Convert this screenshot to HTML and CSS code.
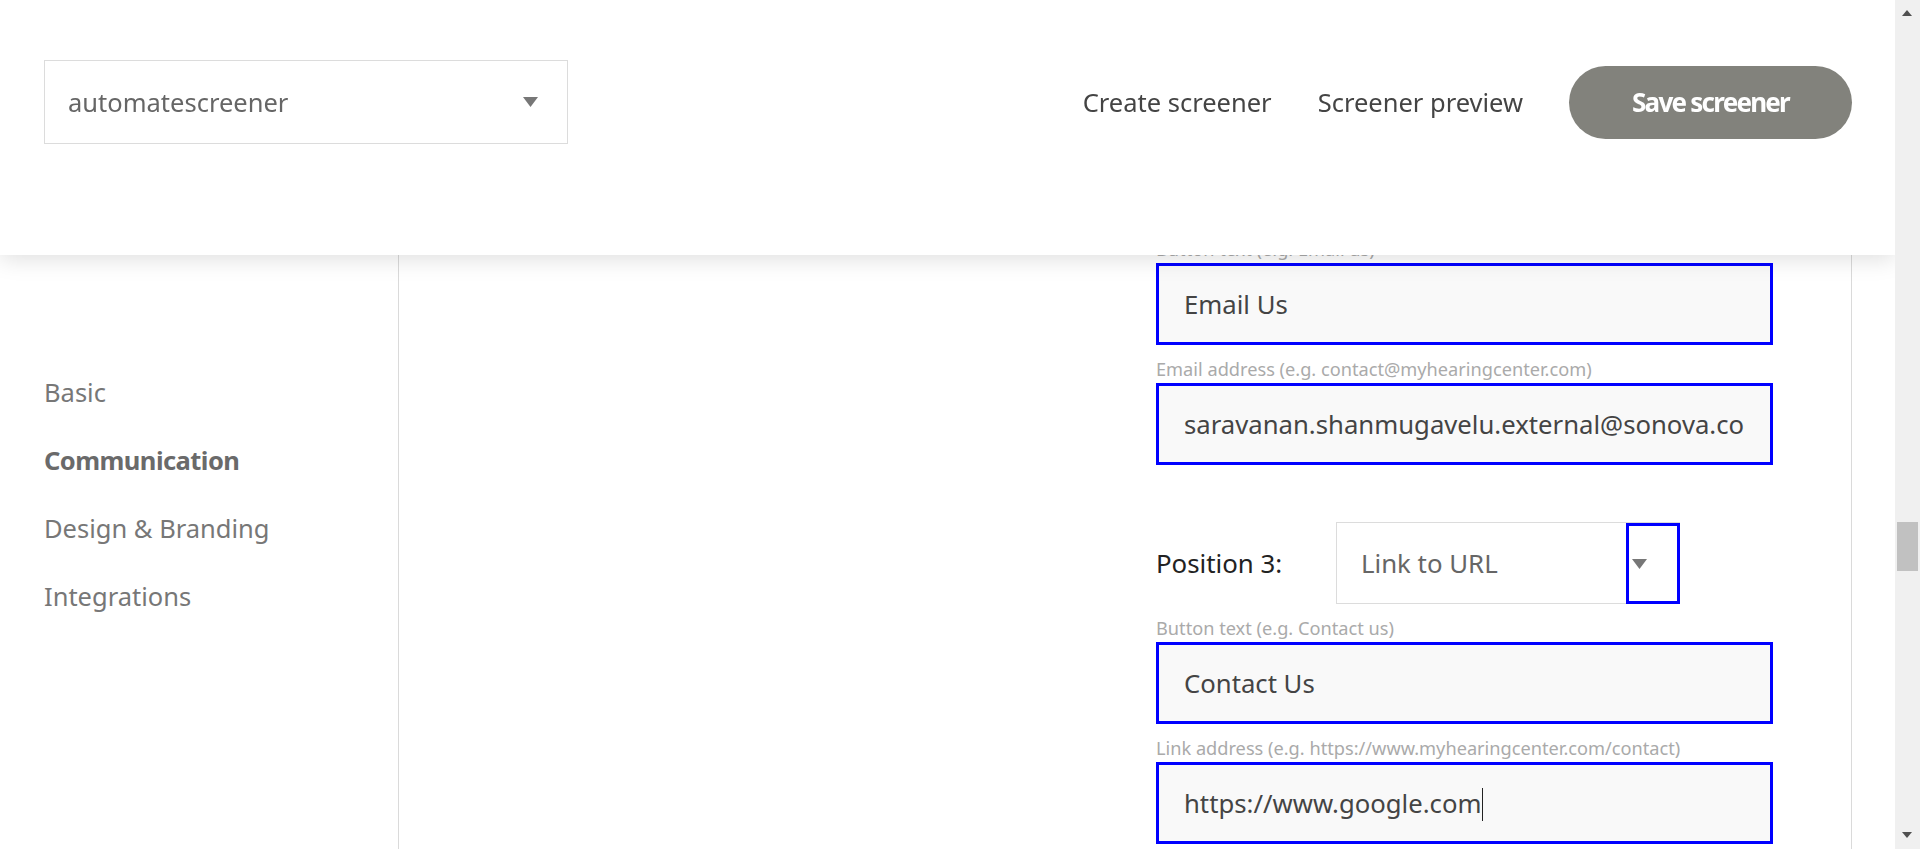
FILE: index.html
```html
<!DOCTYPE html>
<html lang="en">
<head>
<meta charset="utf-8">
<title>Screener settings</title>
<link rel="stylesheet" href="styles.css">
</head>
<body>
<header class="topbar">
  <div class="site-select">
    <span class="site-select__value">automatescreener</span>
    <svg class="tri" width="15" height="10" viewBox="0 0 15 10"><polygon points="0,0 15,0 7.5,10" fill="#777"/></svg>
  </div>
  <nav class="actions">
    <a class="actions__link">Create screener</a>
    <a class="actions__link">Screener preview</a>
    <button class="save-btn">Save screener</button>
  </nav>
</header>

<div class="page">
  <aside class="sidebar">
    <ul class="side-nav">
      <li class="side-nav__item">Basic</li>
      <li class="side-nav__item side-nav__item--active">Communication</li>
      <li class="side-nav__item">Design &amp; Branding</li>
      <li class="side-nav__item">Integrations</li>
    </ul>
  </aside>

  <main class="content">
    <div class="form">
      <div class="field-label">Button text (e.g. Email us)</div>
      <div class="field"><div class="field__text">Email Us</div></div>

      <div class="field-label">Email address (e.g. contact@myhearingcenter.com)</div>
      <div class="field"><div class="field__text">saravanan.shanmugavelu.external@sonova.com</div></div>

      <div class="position-row">
        <div class="position-row__label">Position 3:</div>
        <div class="select">
          <span class="select__value">Link to URL</span>
          <div class="select__arrow">
            <svg class="tri" width="15" height="10" viewBox="0 0 15 10"><polygon points="0,0 15,0 7.5,10" fill="#777"/></svg>
          </div>
        </div>
      </div>

      <div class="field-label">Button text (e.g. Contact us)</div>
      <div class="field"><div class="field__text">Contact Us</div></div>

      <div class="field-label">Link address (e.g. https://www.myhearingcenter.com/contact)</div>
      <div class="field"><div class="field__text">https://www.google.com<span class="caret"></span></div></div>
    </div>
  </main>

  <div class="scrollbar">
    <div class="scrollbar__up"></div>
    <div class="scrollbar__track"><div class="scrollbar__thumb"></div></div>
    <div class="scrollbar__down"></div>
  </div>
</div>
</body>
</html>
```

FILE: styles.css
```css
* { box-sizing: border-box; }

html, body {
  margin: 0;
  padding: 0;
  height: 849px;
  overflow: hidden;
  background: #fff;
  font-family: "Noto Sans", "Open Sans", sans-serif;
}

/* ---------- top bar (overlays scrolled content) ---------- */
.topbar {
  position: fixed;
  top: 0;
  left: 0;
  width: 1895px;
  height: 255px;
  background: #fff;
  box-shadow: 0 4px 22px rgba(0, 0, 0, 0.13);
  display: flex;
  align-items: flex-start;
  padding: 60px 43px 0 44px;
  z-index: 10;
}

.site-select {
  width: 524px;
  height: 84px;
  border: 1px solid #dcdcdc;
  display: flex;
  align-items: center;
  justify-content: space-between;
  padding: 0 29px 0 23px;
  font-size: 25.5px;
  color: #666;
}

.tri { display: block; }

.actions {
  margin-left: auto;
  height: 84px;
  display: flex;
  align-items: center;
  gap: 46px;
}

.actions__link {
  font-size: 25.5px;
  color: #444;
  text-decoration: none;
}

.save-btn {
  width: 283px;
  height: 73px;
  border: none;
  border-radius: 37px;
  background: #82827c;
  color: #fff;
  font-family: "Noto Sans", "Open Sans", sans-serif;
  font-weight: 700;
  font-size: 26px;
  letter-spacing: -1.75px;
  padding: 0;
}

/* ---------- page ---------- */
.page {
  display: flex;
  height: 849px;
}

.sidebar {
  width: 399px;
  flex: none;
  border-right: 1px solid #dadada;
  padding: 358px 0 0 44px;
}

.side-nav {
  list-style: none;
  margin: 0;
  padding: 0;
}

.side-nav__item {
  font-size: 25.5px;
  line-height: 68px;
  color: #777;
}

.side-nav__item--active {
  font-weight: 700;
  letter-spacing: -0.55px;
  color: #6a6a6a;
}

.content {
  flex: 1;
  margin-right: 43px;
  border-right: 1px solid #dadada;
}

.form {
  width: 617px;
  margin-left: 757px;
  padding-top: 237px;
}

.field-label {
  font-size: 18.2px;
  line-height: 24px;
  color: #aaa;
  margin: 12px 0 2px;
  white-space: nowrap;
}

.form > .field-label:first-child { margin-top: 0; }

.field {
  height: 82px;
  border: 3px solid #0000ff;
  background: #f9f9f9;
  padding: 0 25px;
  display: flex;
  align-items: center;
}

.field__text {
  font-size: 25.7px;
  color: #444;
  white-space: nowrap;
  overflow: hidden;
  width: 100%;
  line-height: 35px;
}

.caret {
  display: inline-block;
  width: 1px;
  height: 33px;
  background: #222;
  vertical-align: -8px;
}

.position-row {
  display: flex;
  align-items: center;
  margin-top: 57px;
}

.position-row__label {
  width: 180px;
  font-size: 25.8px;
  color: #222;
}

.select {
  position: relative;
  width: 344px;
  height: 82px;
  border: 1px solid #dcdcdc;
  background: #fff;
  display: flex;
  align-items: center;
  padding-left: 24px;
  font-size: 25.8px;
  color: #666;
}

.select__arrow {
  position: absolute;
  top: 0;
  right: -1px;
  width: 54px;
  height: 81px;
  border: 3px solid #0000ff;
  display: flex;
  align-items: center;
  padding-left: 3px;
}

/* ---------- scrollbar ---------- */
.scrollbar {
  width: 25px;
  flex: none;
  background: #f0f0f0;
  display: flex;
  flex-direction: column;
  align-items: center;
  position: relative;
  z-index: 11;
}

.scrollbar__up,
.scrollbar__down {
  height: 25px;
  width: 25px;
  flex: none;
  position: relative;
}

.scrollbar__up::after,
.scrollbar__down::after {
  content: "";
  position: absolute;
  left: 7px;
  border-left: 5.5px solid transparent;
  border-right: 5.5px solid transparent;
}

.scrollbar__up::after {
  top: 10px;
  border-bottom: 6px solid #505050;
}

.scrollbar__down::after {
  top: 8px;
  border-top: 6px solid #505050;
}

.scrollbar__track {
  flex: 1;
  width: 100%;
  position: relative;
}

.scrollbar__thumb {
  position: absolute;
  left: 2px;
  right: 2px;
  top: 497px;
  height: 49px;
  background: #c1c1c1;
}
```
